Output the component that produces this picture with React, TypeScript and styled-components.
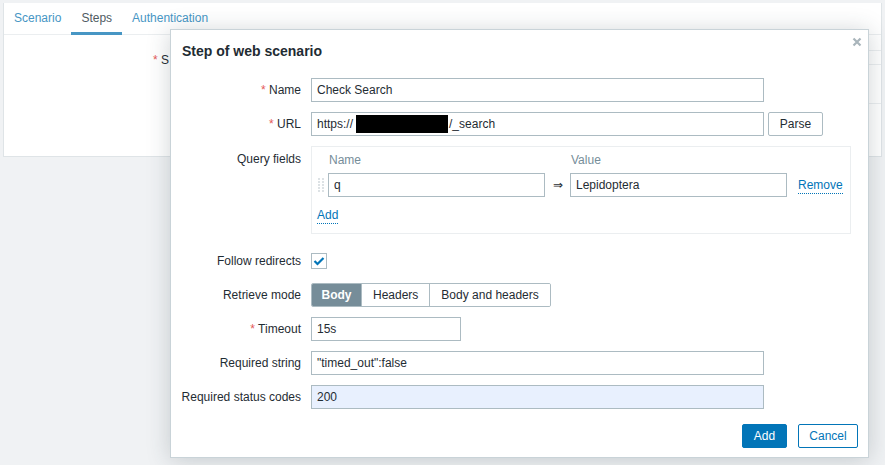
import React, { ReactElement } from "react";
import styled, { createGlobalStyle } from "styled-components";

const GlobalStyle = createGlobalStyle`
  html, body {
    margin: 0;
    padding: 0;
    background: #f0f2f4;
    font-family: "Liberation Sans", Arial, sans-serif;
    font-size: 12px;
    color: #1f2c33;
  }
  * { box-sizing: border-box; }
`;

const queryRows = [{ id: 1, name: "q", value: "Lepidoptera" }];
const modes = ["Body", "Headers", "Body and headers"];

export default function App(): ReactElement {
  return (
    <SPage>
      <GlobalStyle />
      <SCard>
        <STabs>
          <STab>Scenario</STab>
          <STab $active>Steps</STab>
          <STab>Authentication</STab>
        </STabs>
        <SCardBody>
          <SBackLabel>
            <SReq>*</SReq> S
          </SBackLabel>
          <SBackTable>
            <SBackRow />
          </SBackTable>
        </SCardBody>
      </SCard>

      <SDialog>
        <SDialogHeader>
          <STitle>Step of web scenario</STitle>
          <SClose aria-label="Close">
            <svg width="10" height="10" viewBox="0 0 10 10">
              <path d="M1.5 1.5 L8.5 8.5 M8.5 1.5 L1.5 8.5" stroke="#a9b5bb" strokeWidth="2.2" />
            </svg>
          </SClose>
        </SDialogHeader>

        <SForm>
          <SLabel>
            <SReq>*</SReq> Name
          </SLabel>
          <SField>
            <SInput defaultValue="Check Search" $width={453} />
          </SField>

          <SLabel>
            <SReq>*</SReq> URL
          </SLabel>
          <SField>
            <SFakeInput $width={453}>
              https://<SRedact />/_search
            </SFakeInput>
            <SButton>Parse</SButton>
          </SField>

          <SLabel $top>Query fields</SLabel>
          <SQueryBox>
            <SQueryHead />
            <SQueryHeadText>Name</SQueryHeadText>
            <SQueryHead />
            <SQueryHeadText>Value</SQueryHeadText>
            <SQueryHead />
            {queryRows.map((row) => (
              <React.Fragment key={row.id}>
                <SHandle>
                  <svg width="6" height="16" viewBox="0 0 6 16">
                    {[0, 1, 2, 3, 4, 5].map((r) =>
                      [0, 1].map((c) => (
                        <rect key={`${r}-${c}`} x={c * 4} y={r * 3 + 1} width="2" height="2" fill="#dde2e5" />
                      ))
                    )}
                  </svg>
                </SHandle>
                <SInput defaultValue={row.name} $width={217} />
                <SArrow>⇒</SArrow>
                <SInput defaultValue={row.value} $width={217} />
                <SLinkCell>
                  <SLink>Remove</SLink>
                </SLinkCell>
              </React.Fragment>
            ))}
            <SAddCell>
              <SLink>Add</SLink>
            </SAddCell>
          </SQueryBox>

          <SLabel>Follow redirects</SLabel>
          <SField>
            <SCheckbox>
              <svg width="12" height="10" viewBox="0 0 12 10">
                <path d="M1.5 5 L4.5 8 L10.5 2" stroke="#0275b8" strokeWidth="2.2" fill="none" />
              </svg>
            </SCheckbox>
          </SField>

          <SLabel>Retrieve mode</SLabel>
          <SField>
            <SSegment>
              {modes.map((m, i) => (
                <SSegItem key={m} $active={i === 0}>
                  {m}
                </SSegItem>
              ))}
            </SSegment>
          </SField>

          <SLabel>
            <SReq>*</SReq> Timeout
          </SLabel>
          <SField>
            <SInput defaultValue="15s" $width={150} />
          </SField>

          <SLabel>Required string</SLabel>
          <SField>
            <SInput defaultValue={'"timed_out":false'} $width={453} />
          </SField>

          <SLabel>Required status codes</SLabel>
          <SField>
            <SInput defaultValue="200" $width={453} $filled />
          </SField>
        </SForm>

        <SFooter>
          <SPrimary>Add</SPrimary>
          <SSecondary>Cancel</SSecondary>
        </SFooter>
      </SDialog>
    </SPage>
  );
}

const SPage = styled.div`
  position: relative;
  width: 885px;
  height: 465px;
  padding: 3px 3px 0 3px;
  overflow: hidden;
`;
const SCard = styled.div`
  background: #fff;
  border: 1px solid #dfe4e7;
  border-top: none;
  height: 154px;
`;
const STabs = styled.div`
  display: flex;
  height: 32px;
  border-bottom: 1px solid #ebeef0;
`;
const STab = styled.div<{ $active?: boolean }>`
  padding: 0 10px;
  line-height: 30px;
  color: ${({ $active }) => ($active ? "#4f5b62" : "#4796c4")};
  border-bottom: 3px solid ${({ $active }) => ($active ? "#4796c4" : "transparent")};
  height: 32px;
`;
const SCardBody = styled.div`
  display: flex;
  padding-top: 16px;
`;
const SBackLabel = styled.div`
  width: 304px;
  text-align: left;
  padding-left: 149px;
  line-height: 18px;
  color: #1f2c33;
`;
const SBackTable = styled.div`
  flex: 1;
  margin-top: -1px;
  height: 54px;
  border-top: 1px solid #ebeef0;
  border-bottom: 1px solid #ebeef0;
`;
const SBackRow = styled.div`
  height: 14px;
  border-bottom: 1px solid #ebeef0;
`;
const SReq = styled.span`
  color: #e45959;
`;

const SDialog = styled.div`
  position: absolute;
  left: 170px;
  top: 29px;
  width: 699px;
  height: 429px;
  background: #fff;
  border: 1px solid #c9d3d8;
  box-shadow: 0 2px 22px rgba(40, 60, 70, 0.22);
  display: flex;
  flex-direction: column;
`;
const SDialogHeader = styled.div`
  position: relative;
  padding: 12px 11px 18px 11px;
`;
const STitle = styled.h4`
  margin: 0;
  font-size: 14px;
  line-height: 18px;
  font-weight: bold;
  color: #1f2c33;
`;
const SClose = styled.span`
  position: absolute;
  right: 6px;
  top: 7px;
  width: 10px;
  height: 10px;
  display: flex;
`;
const SForm = styled.div`
  display: grid;
  grid-template-columns: 130px 1fr;
  column-gap: 10px;
  row-gap: 10px;
`;
const SLabel = styled.div<{ $top?: boolean }>`
  text-align: right;
  line-height: 24px;
  white-space: nowrap;
  color: #1f2c33;
  margin-top: ${({ $top }) => ($top ? "1px" : "0")};
`;
const SField = styled.div`
  display: flex;
  align-items: center;
  gap: 4px;
  min-height: 24px;
`;
const SInput = styled.input<{ $width: number; $filled?: boolean }>`
  width: ${({ $width }) => $width}px;
  height: 24px;
  border: 1px solid #acbbc2;
  border-radius: 0;
  padding: 0 5px;
  font-family: "Liberation Sans", Arial, sans-serif;
  font-size: 12px;
  color: #1f2c33;
  background: ${({ $filled }) => ($filled ? "#e8f0fe" : "#fff")};
  outline: none;
`;
const SFakeInput = styled.div<{ $width: number }>`
  width: ${({ $width }) => $width}px;
  height: 24px;
  border: 1px solid #acbbc2;
  padding: 0 5px;
  display: flex;
  align-items: center;
  white-space: nowrap;
`;
const SRedact = styled.span`
  display: inline-block;
  width: 92px;
  height: 18px;
  background: #000;
  margin: 0 1px 0 3px;
`;
const SButton = styled.button`
  height: 24px;
  padding: 0 10px;
  border: 1px solid #acbbc2;
  border-radius: 2px;
  background: #fff;
  font-family: "Liberation Sans", Arial, sans-serif;
  font-size: 12px;
  color: #1f2c33;
  width: 55px;
`;
const SQueryBox = styled.div`
  width: 540px;
  height: 88px;
  border: 1px solid #ebeef0;
  padding: 6px 5px 0 5px;
  margin-bottom: 5px;
  display: grid;
  grid-template-columns: 11px 217px 25px 217px 1fr;
  grid-template-rows: 14px 24px 26px;
  row-gap: 6px;
  align-items: center;
`;
const SQueryHead = styled.div``;
const SQueryHeadText = styled.div`
  color: #768d99;
  line-height: 14px;
  padding-left: 1px;
`;
const SHandle = styled.div`
  display: flex;
  align-items: center;
  height: 24px;
  padding-left: 1px;
`;
const SArrow = styled.div`
  text-align: center;
  font-size: 12px;
  color: #1f2c33;
  padding-left: 1px;
`;
const SLinkCell = styled.div`
  padding-left: 11px;
`;
const SAddCell = styled.div`
  grid-column: 1 / -1;
  align-self: start;
  line-height: 24px;
`;
const SLink = styled.span`
  color: #0275b8;
  border-bottom: 1px dotted #0275b8;
  padding-bottom: 1px;
`;
const SCheckbox = styled.span`
  width: 16px;
  height: 16px;
  border: 1px solid #acbbc2;
  background: #fff;
  display: flex;
  align-items: center;
  justify-content: center;
`;
const SSegment = styled.div`
  display: flex;
  height: 24px;
  border: 1px solid #acbbc2;
  border-radius: 2px;
  overflow: hidden;
`;
const SSegItem = styled.div<{ $active?: boolean }>`
  padding: ${({ $active }) => ($active ? "0 9.5px" : "0 11px")};
  line-height: 22px;
  background: ${({ $active }) => ($active ? "#768d99" : "#fff")};
  color: ${({ $active }) => ($active ? "#fff" : "#1f2c33")};
  font-weight: ${({ $active }) => ($active ? "bold" : "normal")};
  & + & {
    border-left: 1px solid #acbbc2;
  }
`;
const SFooter = styled.div`
  margin-top: auto;
  display: flex;
  justify-content: flex-end;
  gap: 11px;
  padding: 0 10px 9px 0;
`;
const SPrimary = styled.button`
  height: 24px;
  width: 45px;
  border: 1px solid #0275b8;
  border-radius: 2px;
  background: #0275b8;
  color: #fff;
  font-family: "Liberation Sans", Arial, sans-serif;
  font-size: 12px;
`;
const SSecondary = styled.button`
  height: 24px;
  width: 60px;
  border: 1px solid #0275b8;
  border-radius: 2px;
  background: #fff;
  color: #0275b8;
  font-family: "Liberation Sans", Arial, sans-serif;
  font-size: 12px;
`;
